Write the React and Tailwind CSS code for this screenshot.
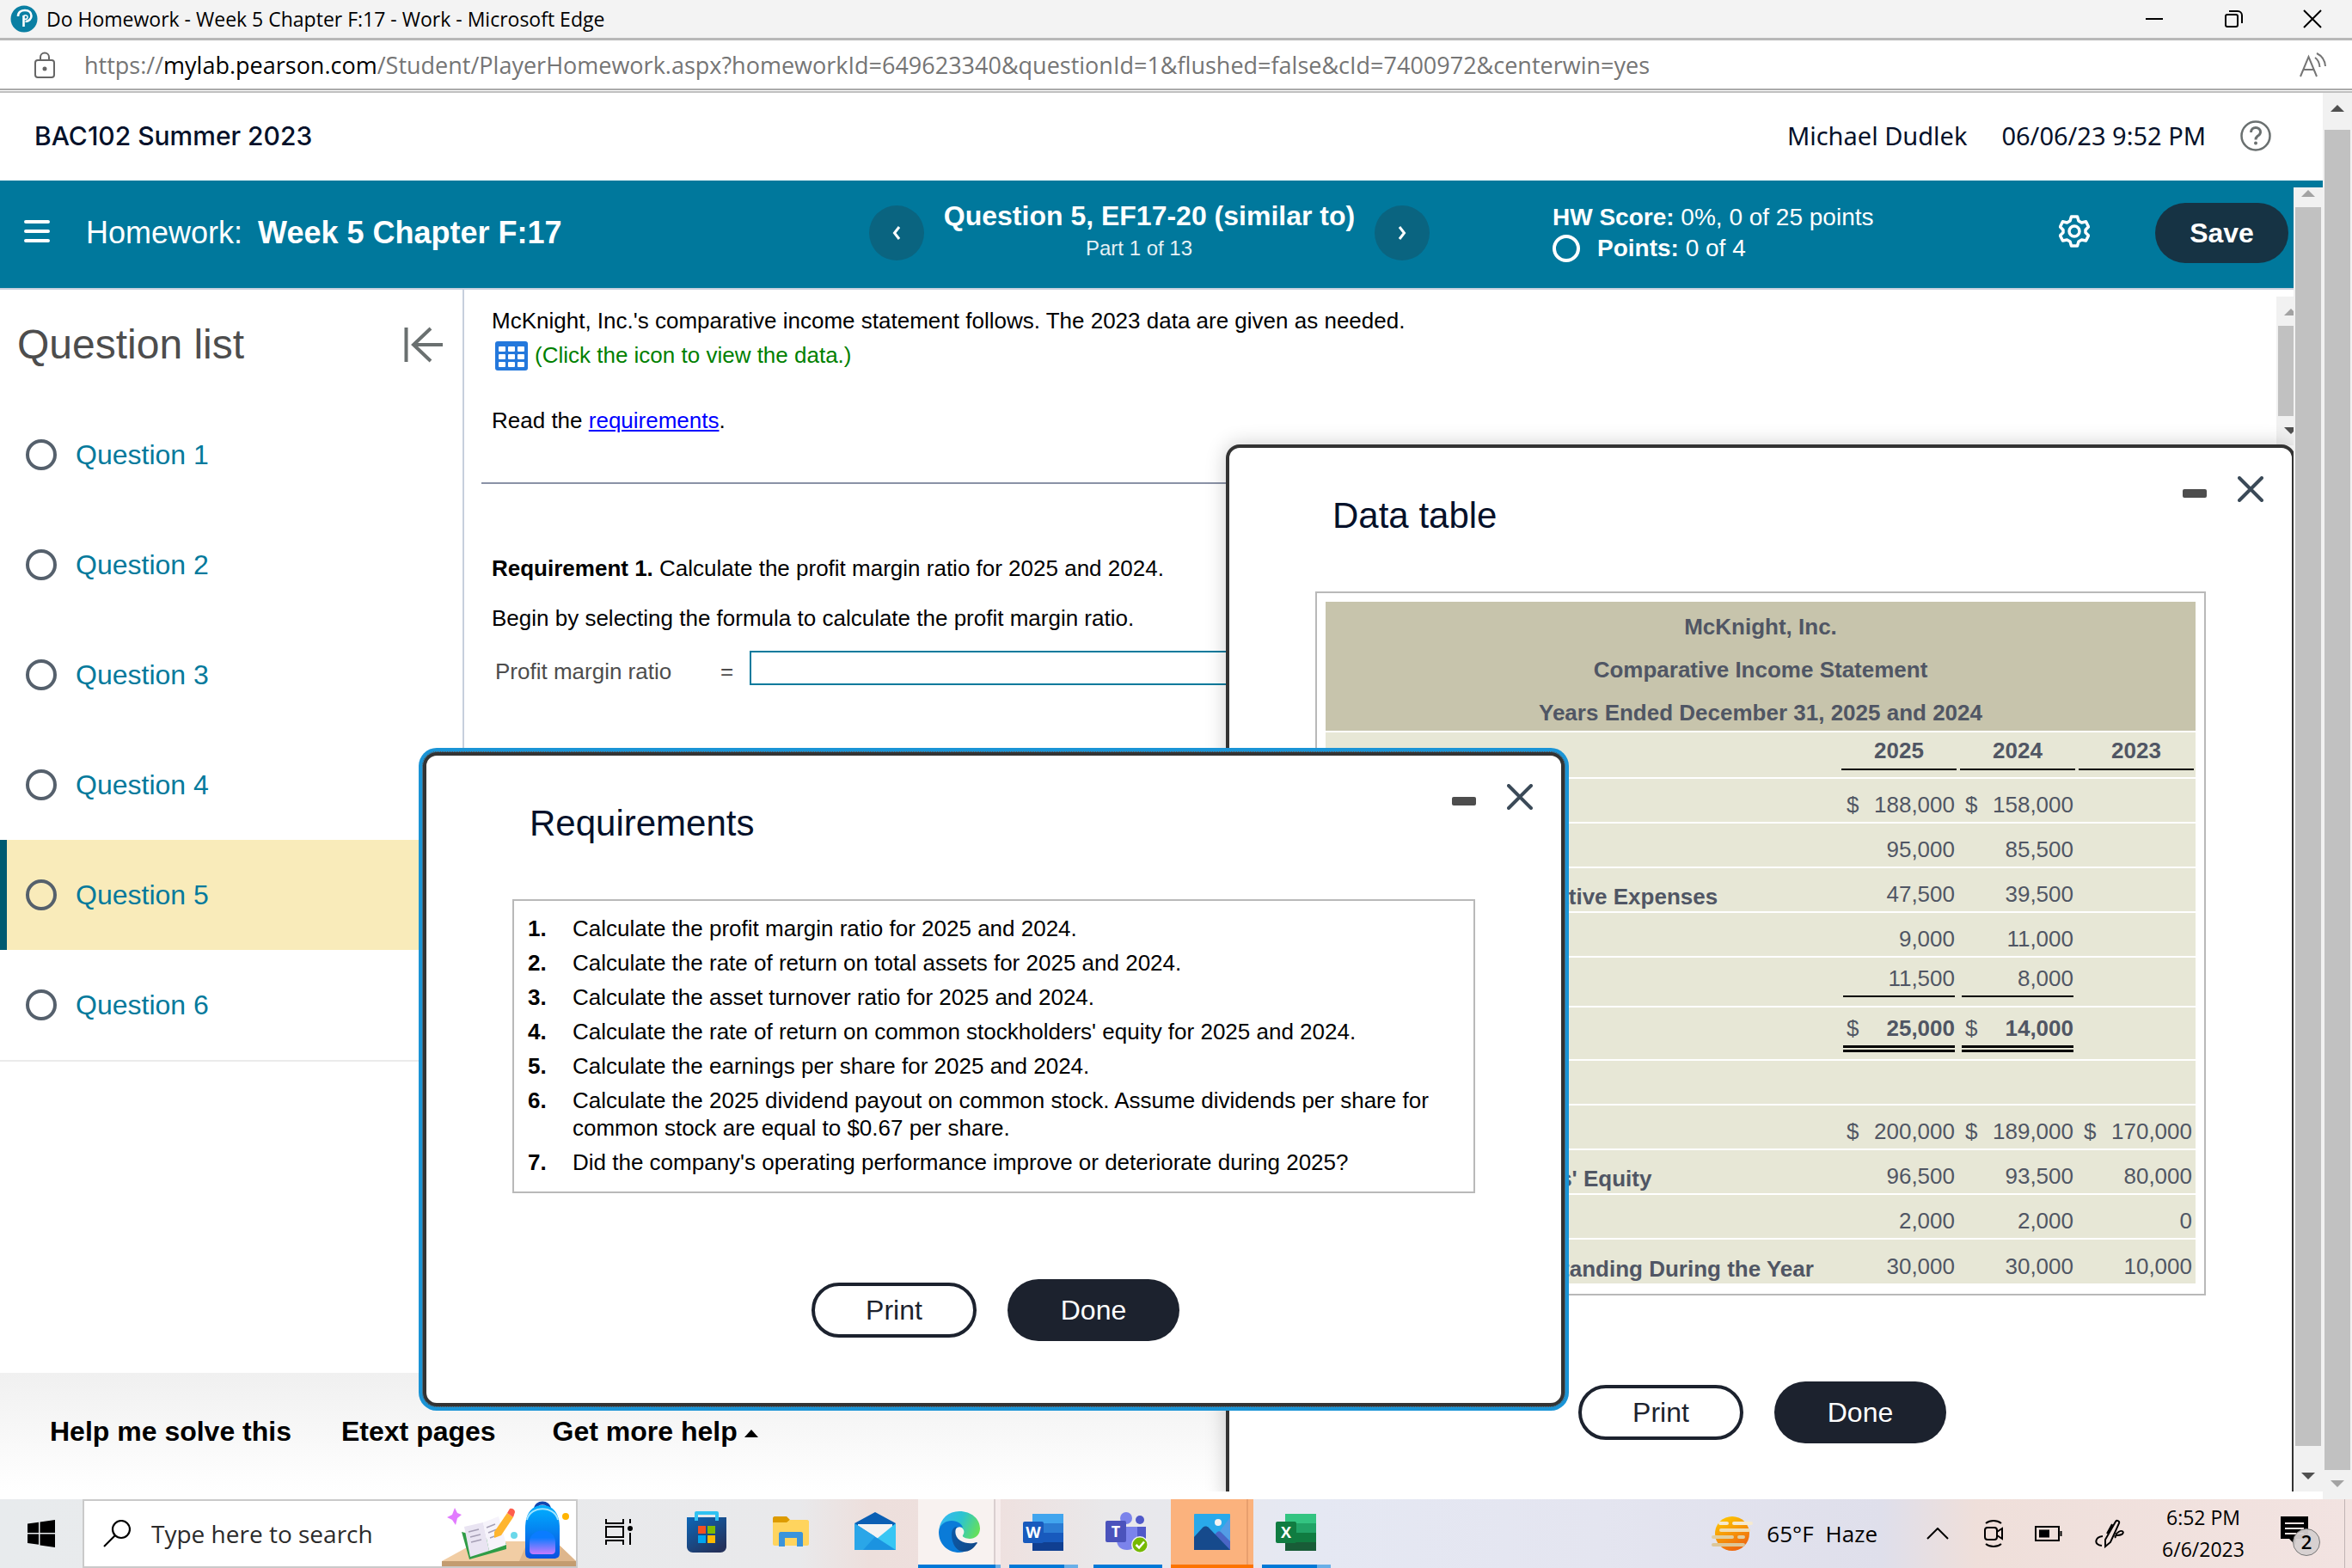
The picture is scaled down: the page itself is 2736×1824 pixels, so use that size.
import { useState } from 'react';

const questions = [1, 2, 3, 4, 5, 6];

const requirements = [
  'Calculate the profit margin ratio for 2025 and 2024.',
  'Calculate the rate of return on total assets for 2025 and 2024.',
  'Calculate the asset turnover ratio for 2025 and 2024.',
  "Calculate the rate of return on common stockholders' equity for 2025 and 2024.",
  'Calculate the earnings per share for 2025 and 2024.',
  'Calculate the 2025 dividend payout on common stock. Assume dividends per share for common stock are equal to $0.67 per share.',
  "Did the company's operating performance improve or deteriorate during 2025?",
];

const statementRows = [
  { label: 'Net Sales Revenue', values: ['188,000', '158,000', ''], dollar: true },
  { label: 'Cost of Goods Sold', values: ['95,000', '85,500', ''] },
  { label: 'Selling and Administrative Expenses', values: ['47,500', '39,500', ''] },
  { label: 'Interest Expense', values: ['9,000', '11,000', ''] },
  { label: 'Income Tax Expense', values: ['11,500', '8,000', ''], rule: 'single' },
  { label: 'Net Income', values: ['25,000', '14,000', ''], dollar: true, rule: 'double' },
  { label: '', values: ['', '', ''] },
  { label: 'Total Assets', values: ['200,000', '189,000', '170,000'], dollar: true },
  { label: "Common Stockholders' Equity", values: ['96,500', '93,500', '80,000'] },
  { label: 'Preferred Dividends', values: ['2,000', '2,000', '0'] },
  { label: 'Common Shares Outstanding During the Year', values: ['30,000', '30,000', '10,000'] },
];

const rowHeights = { single: 'h-[58px]', double: 'h-[62px]', none: 'h-[52px]' };
const ruleStyles = {
  single: 'border-b-2 border-black pb-[6px] mb-[10px]',
  double: 'border-b-8 border-double border-black pb-[6px] mb-[8px]',
  none: 'mb-[6px]',
};

/* ---------- window chrome ---------- */

const TitleBar = () => (
  <div className="flex h-[47px] shrink-0 items-center border-b-[3px] border-[#b8b8b8] bg-[#f3f3f3] pl-3 font-['Open_Sans',sans-serif] text-[23px] text-black">
    <svg viewBox="0 0 32 32" className="mr-[10px] size-8">
      <circle cx="16" cy="16" r="15.5" fill="#0a7fa3" />
      <path d="M9 13c0-5 4-7 8-7 5 0 7.500 3 7.500 6.500S21.500 19 17.500 19" fill="none" stroke="#fff" strokeWidth="2.600" />
      <path d="M15.500 12v13" stroke="#fff" strokeWidth="2.600" />
      <path d="M15.500 12.500c3-1.500 5 0 4.500 2s-2.500 2-4 1.500" fill="none" stroke="#fff" strokeWidth="1.500" />
    </svg>
    <span>Do Homework - Week 5 Chapter F:17 - Work - Microsoft Edge</span>
    <div className="ml-auto flex items-center gap-[70px] pr-[35px]">
      <button aria-label="Minimize">
        <svg viewBox="0 0 22 22" className="size-[22px]" fill="none" stroke="#000" strokeWidth="2">
          <path d="M1 11h20" />
        </svg>
      </button>
      <button aria-label="Restore">
        <svg viewBox="0 0 22 22" className="size-[22px]" fill="none" stroke="#000" strokeWidth="2">
          <rect x="2" y="6" width="14" height="14" rx="2" />
          <path d="M6 2h10a5 5 0 0 1 5 5v9" />
        </svg>
      </button>
      <button aria-label="Close">
        <svg viewBox="0 0 22 22" className="size-[22px]" fill="none" stroke="#000" strokeWidth="2">
          <path d="M1 1l20 20M21 1L1 21" />
        </svg>
      </button>
    </div>
  </div>
);

const AddressBar = () => (
  <div className="shrink-0 border-b-2 border-[#bfbfbf] bg-white pb-px">
    <div className="flex h-[58px] items-center border-b-2 border-[#ababab] pt-[2px] pr-[29px] pl-10 font-['Open_Sans',sans-serif] text-[27px] text-[#757575]">
      <svg viewBox="0 0 24 32" className="mr-[34px] h-8 w-6" fill="none" stroke="#666" strokeWidth="2">
        <rect x="1" y="10" width="22" height="20" rx="3" />
        <path d="M7 10V6.500a5 5 0 0 1 10 0V10" />
        <circle cx="12" cy="20" r="1.500" fill="#666" />
      </svg>
      <span>
        https://<span className="text-black">mylab.pearson.com</span>
        /Student/PlayerHomework.aspx?homeworkId=649623340&amp;questionId=1&amp;flushed=false&amp;cId=7400972&amp;centerwin=yes
      </span>
      <button aria-label="Read aloud" className="ml-auto">
        <svg viewBox="0 0 32 30" className="h-[30px] w-8" fill="none" stroke="#757575" strokeWidth="2">
          <path d="M1 28L10.500 5L20 28M4.500 20h12" />
          <path d="M18 6c3 2 5 6 5.500 11M20 1c6 3 9.500 8 10 15" />
        </svg>
      </button>
    </div>
  </div>
);

const Arrow = ({ down, color }) => (
  <svg viewBox="0 0 16 8" className="h-2 w-4" fill={color}>
    <path d={down ? 'M0 0h16L8 8z' : 'M0 8h16L8 0z'} />
  </svg>
);

const Scrollbar = ({ top, bottom, upColor, downColor }) => (
  <div className="flex w-[34px] shrink-0 flex-col bg-[#f1f1f1]">
    <div className={`flex shrink-0 justify-center ${top}`}>
      <Arrow color={upColor} />
    </div>
    <div className="mx-[2px] flex-1 bg-[#c1c1c1]" />
    <div className={`flex shrink-0 justify-center ${bottom}`}>
      <Arrow down color={downColor} />
    </div>
  </div>
);

/* ---------- homework player ---------- */

const CourseHeader = () => (
  <header className="flex h-[102px] shrink-0 items-center pr-[60px] pb-[2px] pl-10 text-[#05112a]">
    <h1 className="font-['Inter',sans-serif] text-[30px] font-medium">BAC102 Summer 2023</h1>
    <div className="ml-auto flex items-center gap-10 font-['Noto_Sans',sans-serif] text-[29px]">
      <span>Michael Dudlek</span>
      <span>06/06/23 9:52 PM</span>
      <button aria-label="Help">
        <svg viewBox="0 0 36 36" className="size-9" fill="none" stroke="#6a7070" strokeWidth="2.500">
          <circle cx="18" cy="18" r="16.500" />
          <path d="M12.500 14c0-3.500 2.500-5.500 5.500-5.500s5.500 2 5.500 5-2 3.800-3.500 5c-1.500 1.200-2 2-2 4" strokeWidth="3" />
          <circle cx="18" cy="26.500" r="2" fill="#6a7070" stroke="none" />
        </svg>
      </button>
    </div>
  </header>
);

const RoundNav = ({ label, d }) => (
  <button aria-label={label} className="flex size-16 items-center justify-center rounded-full bg-[#0a6480]">
    <svg viewBox="0 0 10 16" className="h-4 w-[10px]" fill="none" stroke="#fff" strokeWidth="3">
      <path d={d} />
    </svg>
  </button>
);

const AssignmentBar = () => (
  <div className="flex h-[119px] shrink-0 items-center border-b-2 border-[#c7cfdd] bg-[#00789c] pr-[6px] pb-3 text-white">
    <div className="flex flex-1 items-center pl-7 text-[36px]">
      <button aria-label="Menu" className="mr-[42px] mb-1">
        <svg viewBox="0 0 30 28" className="h-7 w-[30px]" stroke="#fff" strokeWidth="4" strokeLinecap="round">
          <path d="M2 3h26M2 14h26M2 25h26" />
        </svg>
      </button>
      <span className="mr-[18px]">Homework:</span>
      <span className="font-bold">Week 5 Chapter F:17</span>
    </div>
    <div className="flex w-[652px] items-center justify-between">
      <RoundNav label="Previous question" d="M8 1L2.500 8L8 15" />
      <div className="pb-1 text-center">
        <div className="text-[32px] leading-9 font-bold">Question 5, EF17-20 (similar to)</div>
        <div className="pt-1 pr-6 text-2xl text-[#e6f1f5]">Part 1 of 13</div>
      </div>
      <RoundNav label="Next question" d="M2 1L7.500 8L2 15" />
    </div>
    <div className="ml-[143px] w-[589px] text-[28px] leading-9">
      <div>
        <b>HW Score:</b> 0%, 0 of 25 points
      </div>
      <div className="flex items-center gap-5">
        <span className="size-8 rounded-full border-4 border-white" />
        <span>
          <b>Points:</b> 0 of 4
        </span>
      </div>
    </div>
    <button aria-label="Settings" className="mr-[76px] mb-1">
      <svg viewBox="0 0 36 38" className="h-[38px] w-9" fill="none" stroke="#fff" strokeWidth="3.500" strokeLinejoin="round">
        <path d="M14.500 2h7l1.500 5 3.500 2 5-1.200 3 6-3.500 3.700v3L34.500 24l-3 6-5-1-3.500 2-1.500 5h-7L13 31l-3.500-2-5 1-3-6L5 20.500v-3L1.500 13.800l3-6 5 1.200L13 7z" />
        <circle cx="18" cy="19" r="6" />
      </svg>
    </button>
    <button className="h-[70px] w-[155px] rounded-full bg-[#163344] text-[32px] font-bold">Save</button>
  </div>
);

const QuestionList = ({ current, onSelect }) => (
  <nav className="w-[540px] shrink-0 border-r-2 border-[#c7cfdd]">
    <div className="flex h-32 items-center justify-between pr-[22px] pl-5">
      <h2 className="text-5xl leading-[56px] text-[#4d4d4d]">Question list</h2>
      <button aria-label="Collapse question list">
        <svg viewBox="0 0 46 42" className="h-[42px] w-[46px]" fill="none" stroke="#6a7070" strokeWidth="4">
          <path d="M2.500 1v40M45 21H11M31 2L11 21l20 19" />
        </svg>
      </button>
    </div>
    <ul className="border-b-2 border-[#ebebeb]">
      {questions.map((n) => (
        <li key={n}>
          <a
            href="#question"
            onClick={() => onSelect(n)}
            className={`flex h-32 items-center gap-[22px] border-l-8 pl-[22px] text-[32px] text-[#047a9c] ${
              n === current ? 'border-[#005a70] bg-[#f9ebba]' : 'border-transparent'
            }`}
          >
            <span className="size-9 rounded-full border-4 border-[#55606c]" />
            Question {n}
          </a>
        </li>
      ))}
    </ul>
  </nav>
);

const GridIcon = () => (
  <svg viewBox="0 0 38 34" className="mt-[2px] h-[34px] w-[38px]">
    <rect width="38" height="34" rx="3" fill="#2478dc" />
    {[6, 15, 24].map((y) =>
      [4, 15, 26].map((x) => <rect key={`${x}-${y}`} x={x} y={y} width="8" height="6" rx="1" fill="#fff" />)
    )}
  </svg>
);

const QuestionBody = () => (
  <section className="min-w-0 flex-1 pt-5 pl-5 text-[26px] leading-8 text-black">
    <div className="pl-3">
      <p>McKnight, Inc.&apos;s comparative income statement follows. The 2023 data are given as needed.</p>
      <button className="mt-2 flex h-8 items-center gap-2 pl-1 text-[#008000]">
        <GridIcon />
        (Click the icon to view the data.)
      </button>
      <p className="mt-11">
        Read the{' '}
        <a href="#requirements" className="text-[#0000ff] underline">
          requirements
        </a>
        .
      </p>
    </div>
    <hr className="mt-14 border-t-2 border-[#8a92a6]" />
    <div className="mt-[82px] pl-3">
      <p>
        <b>Requirement 1.</b> Calculate the profit margin ratio for 2025 and 2024.
      </p>
      <p className="mt-[26px]">Begin by selecting the formula to calculate the profit margin ratio.</p>
      <div className="mt-[22px] flex items-end text-[#4d4d4d]">
        <label htmlFor="formula" className="w-[266px] pl-1">
          Profit margin ratio
        </label>
        <span className="w-[34px]">=</span>
        <input id="formula" className="h-10 w-[900px] border-2 border-[#047a9c] bg-white px-2" />
      </div>
    </div>
  </section>
);

const PlayerFooter = () => (
  <footer className="flex h-[138px] shrink-0 items-center gap-[58px] bg-linear-to-b from-[#f0f0f0] to-white pb-[2px] pl-[58px] text-[32px] font-bold text-black">
    <button>Help me solve this</button>
    <button>Etext pages</button>
    <button className="ml-2 flex items-center gap-2">
      Get more help
      <svg viewBox="0 0 16 9" className="mt-1 h-[9px] w-4">
        <path d="M0 9h16L8 0z" />
      </svg>
    </button>
  </footer>
);

const Dialog = ({ title, className, children }) => (
  <div role="dialog" aria-label={title} className={`absolute rounded-2xl border-4 border-[#333] bg-white px-[100px] pb-[72px] ${className}`}>
    <div className="flex h-[167px] justify-between">
      <h2 className="pt-[52px] pl-5 text-[42px] leading-[54px] text-[#05112a]">{title}</h2>
      <div className="-mr-[67px] flex gap-9 pt-[33px]">
        <button aria-label={`Minimize ${title}`} className="mt-[15px] h-[10px] w-7 rounded-xs bg-[#4d4d4d]" />
        <button aria-label={`Close ${title}`} className="h-[30px]">
          <svg viewBox="0 0 30 30" className="size-[30px]" stroke="#3b4a58" strokeWidth="4" strokeLinecap="round">
            <path d="M2 2l26 26M28 2L2 28" />
          </svg>
        </button>
      </div>
    </div>
    {children}
    <div className="mt-[100px] flex items-center justify-center gap-9 pl-1 text-[32px]">
      <button className="h-16 w-48 rounded-full border-4 border-[#1c222e] text-[#1c222e]">Print</button>
      <button className="h-[72px] w-[200px] rounded-full bg-[#1c222e] text-white">Done</button>
    </div>
  </div>
);

const DataTable = () => (
  <Dialog title="Data table" className="top-[299px] -right-[2px] w-[1244px] shadow-[0_0_24px_rgba(0,0,0,0.2)]">
    <div className="border-2 border-[#b9b9b9] px-[10px] pt-[10px] pb-3">
      <table className="w-full table-fixed border-collapse bg-[#e7e7d6] text-[26px] leading-7 text-[#505664]">
        <caption className="bg-[#c7c4ac] font-bold leading-[50px]">
          <div className="pt-1">McKnight, Inc.</div>
          <div>Comparative Income Statement</div>
          <div className="-mb-1">Years Ended December 31, 2025 and 2024</div>
        </caption>
        <thead>
          <tr className="h-[54px] border-y-2 border-white">
            <th aria-label="Account" />
            {['2025', '2024', '2023'].map((year) => (
              <th key={year} scope="col" className="w-[138px] px-[2px] align-bottom">
                <div className="mb-2 border-b-2 border-black pb-[7px]">{year}</div>
              </th>
            ))}
          </tr>
        </thead>
        <tbody>
          {statementRows.map((row, i) => (
            <tr key={i} className={`border-b-2 border-white last:border-b-0 ${rowHeights[row.rule || 'none']}`}>
              <th scope="row" className="pb-[3px] pl-[2px] text-left align-bottom whitespace-nowrap">
                {row.label}
              </th>
              {row.values.map((value, col) => (
                <td key={col} className="px-1 align-bottom">
                  {value && (
                    <div className={`flex justify-between pl-1 ${ruleStyles[row.rule || 'none']}`}>
                      <span>{row.dollar ? '$' : ''}</span>
                      <span className={row.rule === 'double' ? 'font-bold' : ''}>{value}</span>
                    </div>
                  )}
                </td>
              ))}
            </tr>
          ))}
        </tbody>
      </table>
    </div>
  </Dialog>
);

const Requirements = () => (
  <Dialog
    title="Requirements"
    className="top-[657px] left-[492px] w-[1328px] outline-1 outline-dotted outline-[#6b4a3a] shadow-[0_0_0_5px_#1a94d6]"
  >
    <ol className="flex flex-col gap-2 border-2 border-[#b9b9b9] px-4 pt-4 pb-[18px] text-[26px] leading-8 text-black">
      {requirements.map((text, i) => (
        <li key={i} className="flex">
          <b className="w-[52px] shrink-0">{i + 1}.</b>
          <span>{text}</span>
        </li>
      ))}
    </ol>
  </Dialog>
);

/* ---------- taskbar ---------- */

const SearchArt = () => (
  <svg viewBox="0 0 156 78" className="ml-auto h-[78px] w-[156px] self-end">
    <defs>
      <linearGradient id="bag" x1="0" y1="0" x2="0" y2="1">
        <stop offset="0" stopColor="#00b0ff" />
        <stop offset="1" stopColor="#0a50e0" />
      </linearGradient>
      <linearGradient id="pocket" x1="0" y1="0" x2="0" y2="1">
        <stop offset="0.300" stopColor="#0a7cff" />
        <stop offset="1" stopColor="#c77bff" />
      </linearGradient>
    </defs>
    <path d="M0 72L42 49h90l24 23z" fill="#f1cda4" />
    <path d="M100 49h32l24 23H90z" fill="#deb68c" />
    <path d="M0 72h156v6H0z" fill="#c39c70" />
    <path d="M15 10l3 6 5 2-5 4-2 8-4-6-6-3 6-3z" fill="#e27bff" />
    <path d="M23 38L32 70l43-12v-7z" fill="#2f9c46" />
    <path d="M26 32l22-5 7 33-22 7z" fill="#e9e4f2" />
    <path d="M48 27l18-7 9 33-20 7z" fill="#f6f3fb" />
    <path d="M31 38l12-3M33 44l12-3M34 50l12-3M52 33l10-4M54 39l10-4M56 45l8-3" stroke="#a59fb5" strokeWidth="1.500" />
    <path d="M61 38L76 16l7 5-14 21-8 3z" fill="#ffb52e" />
    <path d="M76 16l3-5c3-1 6 1 6 4l-2 6z" fill="#ff5d4d" />
    <circle cx="84" cy="42" r="4" fill="#6ad8ea" />
    <path d="M109 12c0-10 16-10 16 0" fill="none" stroke="#1146b0" strokeWidth="4" />
    <path d="M97 34c0-18 8-27 20-27s20 9 20 27v28c0 5-2 7-7 7h-26c-5 0-7-2-7-7z" fill="url(#bag)" />
    <path d="M99 24c4-17 32-17 36 0" fill="none" stroke="#9ee3ff" strokeWidth="2" />
    <path d="M102 50c0-18 30-18 30 0v9c0 4-2 5-5 5h-20c-3 0-5-1-5-5z" fill="url(#pocket)" />
    <circle cx="144" cy="20" r="4" fill="#ffb400" />
  </svg>
);

const StoreIcon = () => (
  <svg viewBox="0 0 48 48" className="size-12">
    <defs>
      <linearGradient id="store" x1="0" y1="0" x2="0.700" y2="1">
        <stop offset="0" stopColor="#0d67b8" />
        <stop offset="1" stopColor="#24325c" />
      </linearGradient>
    </defs>
    <path d="M1 7h46v34c0 4-3 7-7 7H8c-4 0-7-3-7-7z" fill="url(#store)" />
    <path d="M12 11V2h24v9" fill="none" stroke="#31c2f2" strokeWidth="4" strokeLinejoin="round" />
    <path d="M14 17h9v9h-9z" fill="#f25022" />
    <path d="M25 17h9v9h-9z" fill="#7fba00" />
    <path d="M14 28h9v9h-9z" fill="#00a4ef" />
    <path d="M25 28h9v9h-9z" fill="#ffb900" />
  </svg>
);

const FolderIcon = () => (
  <svg viewBox="0 0 48 48" className="size-12">
    <path d="M3 8c0-1 1-2 2-2h14l4 4-4 4H3z" fill="#dd9b00" />
    <path d="M3 13h16l4-3h20c1 0 2 1 2 2v26c0 1-1 2-2 2H5c-1 0-2-1-2-2z" fill="#ffd45e" />
    <path d="M10 41V26c0-1 1-2 2-2h24c1 0 2 1 2 2v15h-7V31H17v10z" fill="#3a94dc" />
  </svg>
);

const MailIcon = () => (
  <svg viewBox="0 0 48 48" className="size-12">
    <path d="M0 14L24 1l24 13v8H0z" fill="#0a5fb4" />
    <path d="M4 15h40v10L24 36 4 25z" fill="#f3f3f3" />
    <path d="M48 14v31H10z" fill="#37c6f4" />
    <path d="M0 14l48 31H0z" fill="#1b93e0" />
    <path d="M0 14l24 15.500L10 45H0z" fill="#2aa6e8" />
  </svg>
);

const EdgeIcon = () => (
  <svg viewBox="0 0 48 48" className="size-12">
    <defs>
      <linearGradient id="edgeTop" x1="0" y1="0.300" x2="1" y2="0.600">
        <stop offset="0" stopColor="#35b8f4" />
        <stop offset="0.500" stopColor="#2cc4cf" />
        <stop offset="1" stopColor="#66e05a" />
      </linearGradient>
      <linearGradient id="edgeLow" x1="0" y1="0" x2="1" y2="0.500">
        <stop offset="0" stopColor="#0c5aa8" />
        <stop offset="1" stopColor="#114a8b" />
      </linearGradient>
    </defs>
    <path d="M0 24C1 9 11 0 24 0c14 0 24 9 24 20 0 8-6 12-12 12-5 0-9-2-8-4 3-4 1-9-4-10C14 9 2 14 0 24z" fill="url(#edgeTop)" />
    <path d="M0 24c1-9 8-13 15-13 7 0 12 4 13 8-4-2-9 0-10 5-1 8 5 22 14 22-3 1-5 2-8 2C10 48 0 38 0 24z" fill="#0a7bd8" />
    <path d="M15 27c0-6 3-9 6-9-3 5-2 12 4 16 6 4 14 4 19 2 1 0 1 1 0 2-4 6-9 9-15 9-8 0-14-9-14-20z" fill="url(#edgeLow)" />
  </svg>
);

// Word and Excel share the same sheet-plus-tile drawing
const OfficeIcon = ({ letter, bands, tile }) => (
  <svg viewBox="0 0 48 48" className="size-12">
    {bands.map((fill, i) => (
      <rect key={fill} x="11" y={3 + i * 11} width="36" height={i === 3 ? 10 : 11} fill={fill} />
    ))}
    <rect y="12" width="24" height="25" rx="2" fill={tile} />
    <text x="12" y="31" textAnchor="middle" fill="#fff" fontSize="18" fontWeight="700" fontFamily="Open Sans, sans-serif">
      {letter}
    </text>
  </svg>
);

const TeamsIcon = () => (
  <svg viewBox="0 0 52 50" className="h-[50px] w-[52px]">
    <circle cx="24" cy="9" r="7" fill="#7b83eb" />
    <circle cx="40" cy="11" r="5" fill="#5059c9" />
    <path d="M35 19h12v15c0 5-3 8-7 8h-5z" fill="#5059c9" />
    <path d="M13 19h24v15c0 8-5 12-12 12s-12-4-12-12z" fill="#7b83eb" />
    <rect y="12" width="24" height="25" rx="2" fill="#4b53bc" />
    <text x="12" y="31" textAnchor="middle" fill="#fff" fontSize="18" fontWeight="700" fontFamily="Open Sans, sans-serif">
      T
    </text>
    <circle cx="40" cy="40" r="10" fill="#f2f2f2" />
    <circle cx="40" cy="40" r="8.500" fill="#76b900" />
    <path d="M35.500 40l3.500 3.500 6-7" fill="none" stroke="#fff" strokeWidth="2.500" />
  </svg>
);

const PhotosIcon = () => (
  <svg viewBox="0 0 42 42" className="size-[42px]">
    <rect width="42" height="42" rx="1" fill="#29a9ea" />
    <path d="M42 4v28L30 20z" fill="#7d8fe0" opacity="0.500" />
    <path d="M24 42V24l3-3c1-1 3-1 4 0l11 11v10z" fill="#4a66c6" />
    <path d="M0 27l10-11c2-2 5-2 7 0l25 26H0z" fill="#164a8c" />
    <circle cx="28" cy="10" r="4" fill="#f3f3f3" />
  </svg>
);

const TaskSlot = ({ label, children, className = '', bar, tail }) => (
  <button aria-label={label} className={`flex h-full w-24 flex-col ${className}`}>
    <span className="flex flex-1 items-center justify-center">{children}</span>
    <span className="flex h-1 w-full justify-center">
      {bar && <span className={bar} />}
      {tail && <span className={tail} />}
    </span>
  </button>
);

const Taskbar = () => (
  <div className="flex h-20 shrink-0 items-center bg-[linear-gradient(90deg,#e8ebed_0%,#e9e9eb_34%,#eddfdc_37%,#efe0de_42%,#e9e8ea_47%,#e5e8f3_56%,#e4e5f0_68%,#dfdfeb_80%,#efdfda_84%,#f2e3e1_100%)] font-['Open_Sans',sans-serif] text-black">
    <button aria-label="Start" className="flex w-24 justify-center">
      <svg viewBox="0 0 32 32" className="size-8">
        <path d="M0 4.500L13 2.700V15H0zM14.500 2.500L32 0v15H14.500zM0 16.500h13v12.300L0 27zM14.500 16.500H32V32l-17.500-2.500z" />
      </svg>
    </button>
    <label className="flex h-20 w-[576px] items-center border-2 border-[#cacaca] bg-white pl-[22px]">
      <svg viewBox="0 0 32 32" className="mr-6 size-8 shrink-0" fill="none" stroke="#000" strokeWidth="2.200">
        <circle cx="21" cy="11" r="10" />
        <path d="M14 18L1 31" />
      </svg>
      <input
        aria-label="Search"
        placeholder="Type here to search"
        className="w-[280px] text-[28px] placeholder:text-[#2b2b2b]"
      />
      <SearchArt />
    </label>
    <TaskSlot label="Task view">
      <svg viewBox="0 0 34 32" className="h-8 w-[34px]" fill="none" stroke="#000" strokeWidth="2">
        <path d="M2 1v5h20V1M2 31v-5h20v5" />
        <path d="M2 10h20v12H2zM30 1v5M30 17v14" />
        <circle cx="30" cy="12" r="3" fill="#000" stroke="none" />
      </svg>
    </TaskSlot>
    <div className="ml-[6px] flex h-full gap-[2px]">
      <TaskSlot label="Store">
        <StoreIcon />
      </TaskSlot>
      <TaskSlot label="File Explorer">
        <FolderIcon />
      </TaskSlot>
      <TaskSlot label="Mail">
        <MailIcon />
      </TaskSlot>
      <TaskSlot
        label="Edge"
        className="bg-[linear-gradient(90deg,#f8f2f0_88px,#d9cfcf_88px,#d9cfcf_90px,#f6ecec_90px)]"
        bar="w-[90px] bg-[#0078d7]"
        tail="w-[6px] bg-[#6aafe8]"
      >
        <EdgeIcon />
      </TaskSlot>
      <TaskSlot label="Word" bar="w-16 bg-[#0078d7]" tail="w-4 bg-[#6aafe8]">
        <OfficeIcon letter="W" bands={['#41a5ee', '#2b7cd3', '#185abd', '#103f91']} tile="#185abd" />
      </TaskSlot>
      <TaskSlot label="Teams" bar="w-20 bg-[#0078d7]">
        <TeamsIcon />
      </TaskSlot>
      <TaskSlot
        label="Photos"
        className="bg-[linear-gradient(90deg,#fbb27d_88px,#e89f6e_88px,#e89f6e_90px,#fbb27d_90px)]"
        bar="w-24 bg-[#fc7300]"
      >
        <PhotosIcon />
      </TaskSlot>
      <TaskSlot label="Excel" bar="w-16 bg-[#0078d7]" tail="w-4 bg-[#6aafe8]">
        <OfficeIcon letter="X" bands={['#33c481', '#21a366', '#107c41', '#185c37']} tile="#107c41" />
      </TaskSlot>
    </div>
    <div className="ml-auto flex h-full items-center">
      <svg viewBox="0 0 48 42" className="mr-4 h-[42px] w-12">
        <defs>
          <linearGradient id="sun" x1="0" y1="0" x2="0.500" y2="1">
            <stop offset="0" stopColor="#ffd000" />
            <stop offset="1" stopColor="#ef6a10" />
          </linearGradient>
        </defs>
        <circle cx="24" cy="21" r="20" fill="url(#sun)" />
        <g strokeWidth="4" strokeLinecap="round">
          <path d="M10 9h8M26 9h20" stroke="#f5ead0" />
          <path d="M11 17h32" stroke="#f0ddb4" />
          <path d="M2 25h22M32 25h5" stroke="#e2cfa0" />
          <path d="M2 34h35" stroke="#dcc79a" />
        </g>
      </svg>
      <span className="text-[26px]">65°F</span>
      <span className="ml-[14px] text-[26px]">Haze</span>
      <svg viewBox="0 0 26 14" className="ml-[57px] h-[14px] w-[26px]" fill="none" stroke="#000" strokeWidth="2">
        <path d="M1 13L13 1l12 12" />
      </svg>
      <svg viewBox="0 0 24 32" className="ml-10 h-8 w-6" fill="none" stroke="#000" strokeWidth="2">
        <rect x="2" y="9" width="14" height="14" rx="3" />
        <path d="M16 14l6-4v12l-6-4M3 4c5-4 13-4 18 0M3 28c5 4 13 4 18 0" />
      </svg>
      <svg viewBox="0 0 32 18" className="ml-9 h-[18px] w-8" fill="none" stroke="#000" strokeWidth="2">
        <rect x="1" y="1" width="27" height="16" />
        <path d="M30.500 6v6" />
        <rect x="5" y="4.500" width="12" height="9" fill="#000" stroke="none" />
      </svg>
      <svg viewBox="0 0 34 34" className="ml-[38px] h-[34px] w-[34px]" fill="none" stroke="#000" strokeWidth="2">
        <path d="M12 32V24L24 3c1-2 5-1 4 2L18 27zM14 17l6-11M9 20c-9 1-11 10-1 11M24 18c8-8 11-2 7 0-5 2-9 0-7 4" />
      </svg>
      <div className="ml-[38px] flex w-[108px] flex-col items-center text-[23px] leading-[37px]">
        <span>6:52 PM</span>
        <span>6/6/2023</span>
      </div>
      <button aria-label="Notifications" className="ml-9 flex w-[46px]">
        <svg viewBox="0 0 46 48" className="mt-[6px] h-12 w-[46px]">
          <path d="M0 1h32v26H18l-1 7-7-7H0z" />
          <path d="M5 9h22M5 15h22M5 21h22" stroke="#f2e3e1" strokeWidth="2" />
          <circle cx="30" cy="31" r="15.500" fill="#d5d0d0" fillOpacity="0.950" stroke="#777" />
          <text x="30" y="39" textAnchor="middle" fontSize="22" fontWeight="600" fontFamily="Open Sans, sans-serif">
            2
          </text>
        </svg>
      </button>
      <div className="ml-7 h-full w-[9px] border-l border-[#c0b4b4]" />
    </div>
  </div>
);

const App = () => {
  const [current, setCurrent] = useState(5);

  return (
    <div className="flex h-screen flex-col overflow-hidden bg-white font-['Liberation_Sans',Arial,sans-serif]">
      <TitleBar />
      <AddressBar />
      <div className="flex min-h-0 flex-1">
        <div className="flex min-w-0 flex-1 flex-col pb-[9px]">
          <CourseHeader />
          <div className="flex min-h-0 flex-1 border-t-8 border-[#00789c]">
            <main className="relative flex min-w-0 flex-1 flex-col overflow-hidden">
              <AssignmentBar />
              <div className="flex min-h-0 flex-1">
                <QuestionList current={current} onSelect={setCurrent} />
                <QuestionBody />
                <div className="mt-2 flex h-[173px] w-5 overflow-hidden">
                  <Scrollbar top="h-[34px] pt-[14px]" bottom="h-[34px] pt-[13px]" upColor="#a3a3a3" downColor="#505050" />
                </div>
              </div>
              <PlayerFooter />
              <DataTable />
              <Requirements />
            </main>
            <Scrollbar top="h-[23px] pt-[3px]" bottom="h-[53px] pt-[31px]" upColor="#a3a3a3" downColor="#505050" />
          </div>
        </div>
        <Scrollbar top="h-[43px] pt-[14px]" bottom="h-[34px] pt-3" upColor="#505050" downColor="#a3a3a3" />
      </div>
      <Taskbar />
    </div>
  );
};

export default App;
